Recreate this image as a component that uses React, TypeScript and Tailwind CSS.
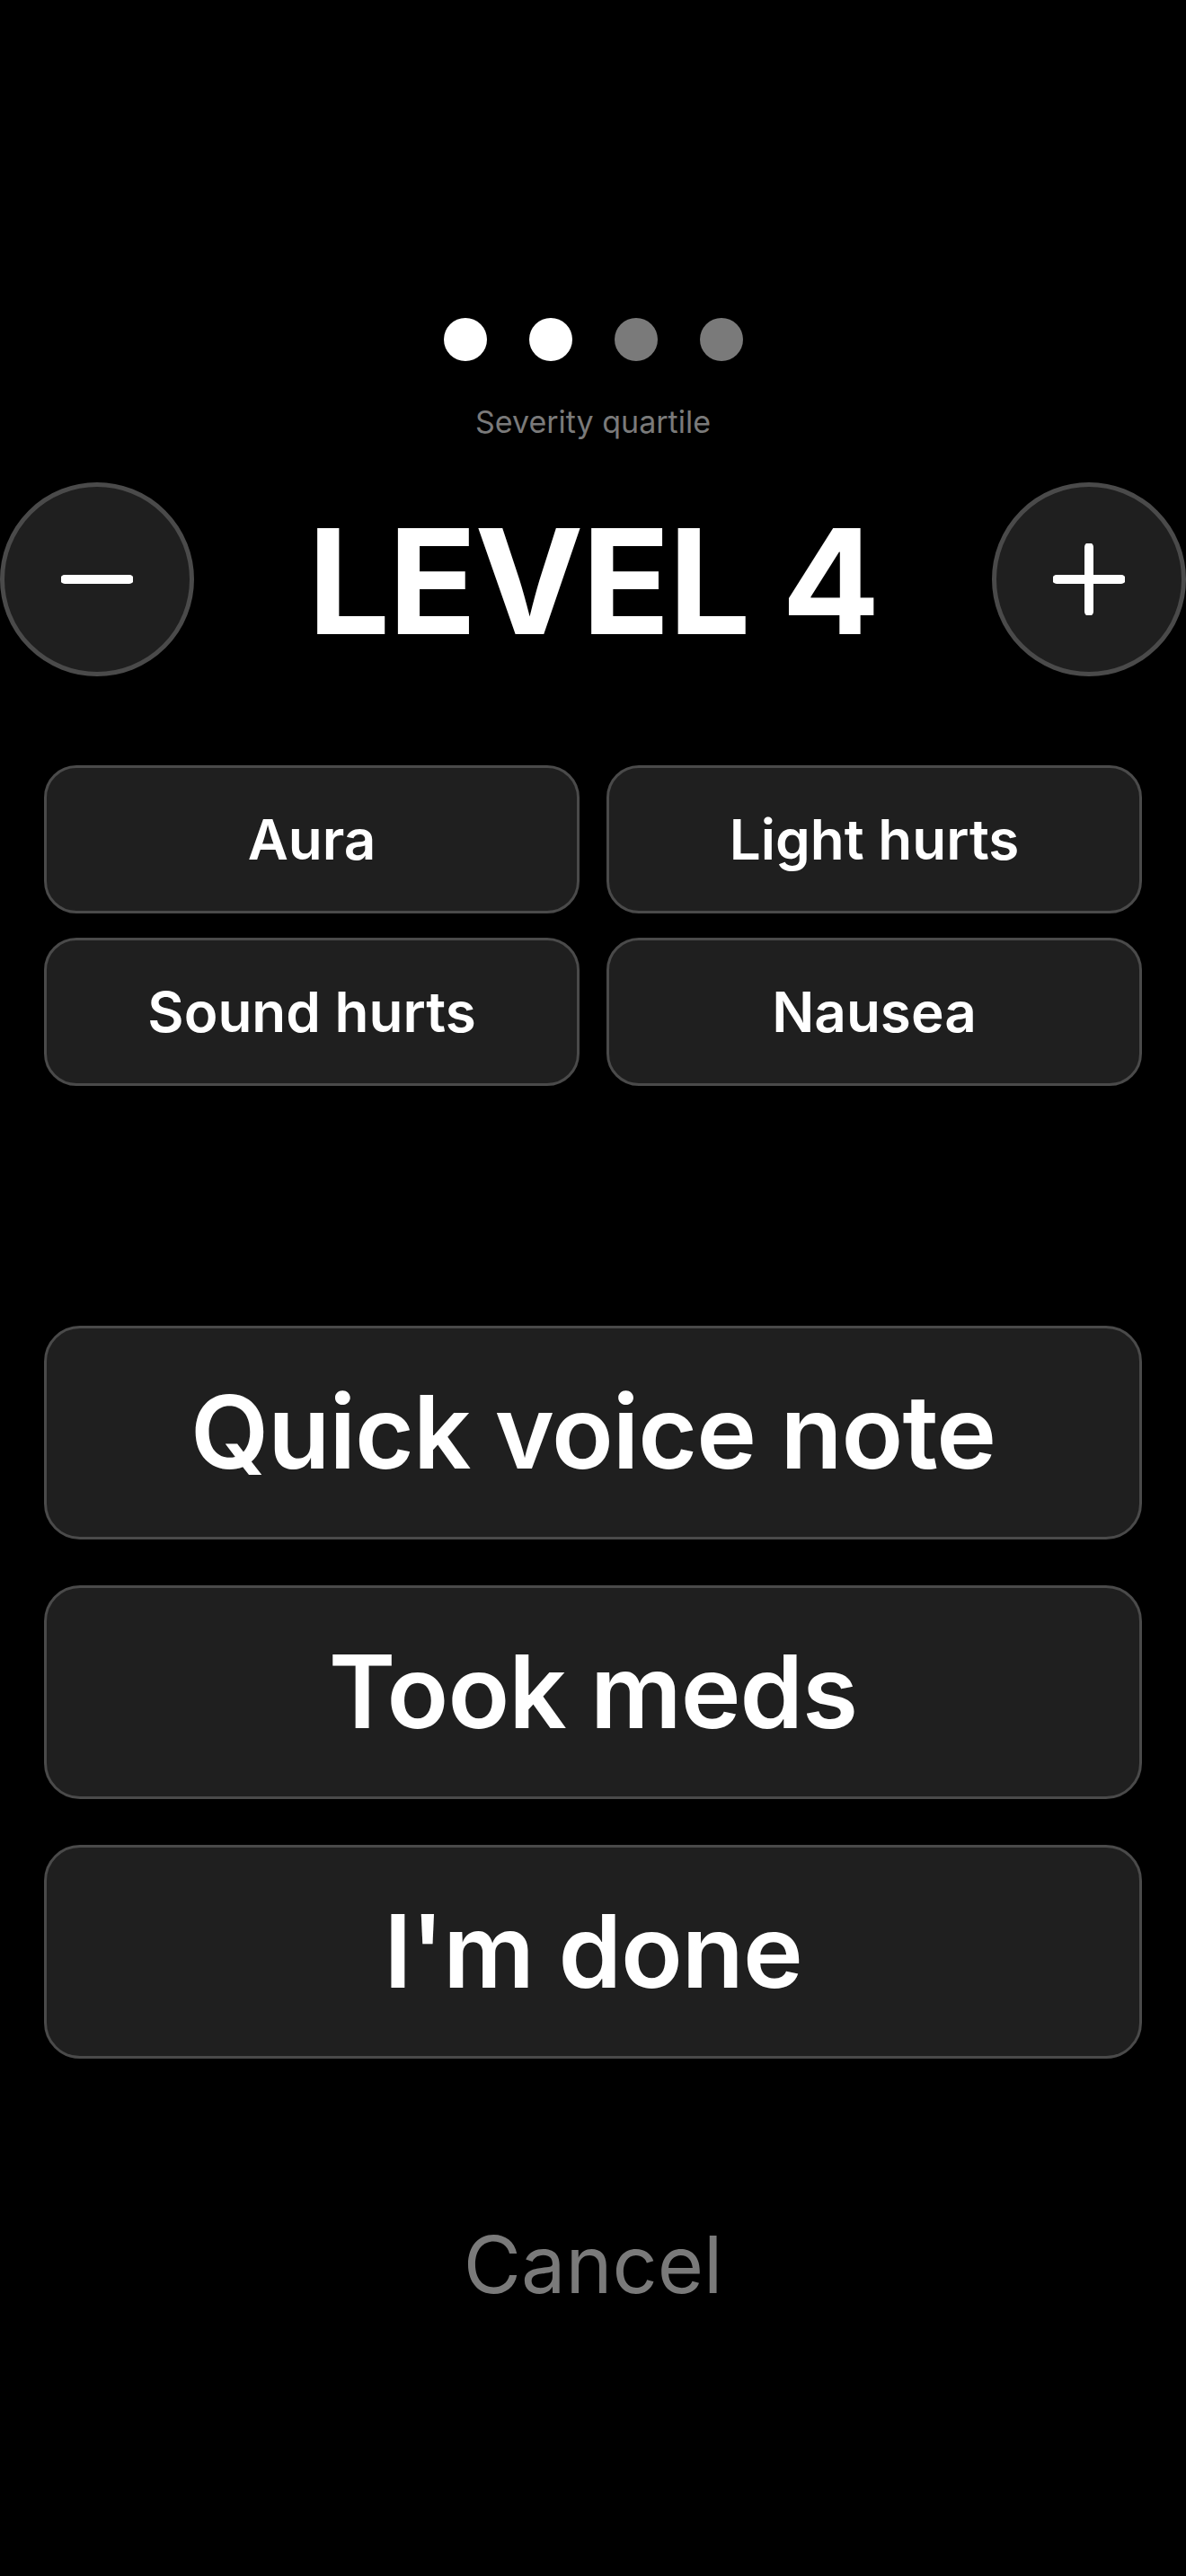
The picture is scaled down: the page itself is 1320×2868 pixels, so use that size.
import React from "react";

const chips = ["Aura", "Light hurts", "Sound hurts", "Nausea"];
const actions = ["Quick voice note", "Took meds", "I'm done"];

function Stepper({ kind }: { kind: "minus" | "plus" }) {
  return (
    <button className="w-[216px] h-[216px] shrink-0 rounded-full bg-[#1f1f1f] border-[5px] border-[#4a4a4a] flex items-center justify-center">
      <svg width="80" height="80" viewBox="0 0 80 80">
        <line x1="4" y1="40" x2="76" y2="40" stroke="white" strokeWidth="10" strokeLinecap="round" />
        {kind === "plus" && (
          <line x1="40" y1="4" x2="40" y2="76" stroke="white" strokeWidth="10" strokeLinecap="round" />
        )}
      </svg>
    </button>
  );
}

export default function App() {
  return (
    <div
      className="min-h-[2868px] bg-black text-white flex flex-col items-center pt-[354px]"
      style={{ fontFamily: "Inter, 'Noto Sans', sans-serif" }}
    >
      <div className="flex gap-[47px]">
        {[true, true, false, false].map((on, i) => (
          <span key={i} className={`w-[48px] h-[48px] rounded-full ${on ? "bg-white" : "bg-[#7a7a7a]"}`} />
        ))}
      </div>
      <p className="mt-[50px] text-[34px] leading-[36px] text-[#7a7a7a]">Severity quartile</p>

      <div className="mt-[49px] w-full flex items-center justify-between">
        <Stepper kind="minus" />
        <h1 className="text-[162px] leading-none font-bold tracking-[-2px] pt-[4px]">LEVEL 4</h1>
        <Stepper kind="plus" />
      </div>

      <div className="mt-[99px] w-full px-[49px] grid grid-cols-2 gap-x-[30px] gap-y-[27px]">
        {chips.map((c) => (
          <button
            key={c}
            className="h-[165px] rounded-[36px] bg-[#1f1f1f] border-[3px] border-[#4a4a4a] text-[62px] font-semibold"
          >
            {c}
          </button>
        ))}
      </div>

      <div className="mt-[267px] w-full px-[49px] flex flex-col gap-[51px]">
        {actions.map((a) => (
          <button
            key={a}
            className="h-[238px] rounded-[40px] bg-[#1f1f1f] border-[3px] border-[#4a4a4a] text-[113px] font-semibold tracking-[-1px]"
          >
            {a}
          </button>
        ))}
      </div>

      <button className="mt-[174px] text-[88px] leading-[110px] text-[#7a7a7a]">Cancel</button>
    </div>
  );
}
